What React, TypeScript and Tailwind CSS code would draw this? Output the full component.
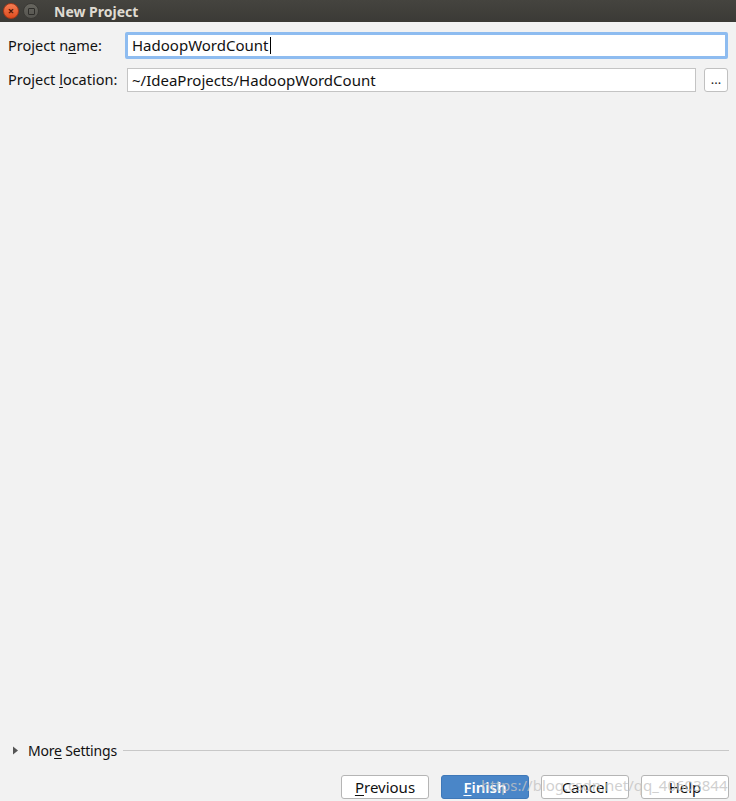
const font = { fontFamily: '"Noto Sans", "DejaVu Sans", sans-serif' };

function Btn({ u, rest, primary }: { u: string; rest: string; primary?: boolean }) {
  return (
    <button
      className={
        primary
          ? "w-[88px] h-[24px] rounded-[3px] border border-[#3f78b8] bg-[#4a86c8] text-white text-[15px] font-semibold leading-none"
          : "w-[88px] h-[24px] rounded-[3px] border border-[#b5b5b5] bg-white text-[#111] text-[15px] leading-none"
      }
    >
      <span className="underline underline-offset-2">{u}</span>
      {rest}
    </button>
  );
}

export default function App() {
  return (
    <div className="w-[736px] h-[801px] flex flex-col bg-[#f2f2f2] overflow-hidden" style={font}>
      {/* title bar */}
      <div className="h-[22px] bg-gradient-to-b from-[#45443f] to-[#3b3a36] flex items-center pl-[3px] gap-[4px]">
        <div className="w-[16px] h-[16px] rounded-full bg-gradient-to-b from-[#f47d52] to-[#de4b1c] border border-[#a8391a] flex items-center justify-center text-[#4a1505] text-[11px] font-bold leading-none pb-px">
          ×
        </div>
        <div className="w-[16px] h-[16px] rounded-full bg-gradient-to-b from-[#67665f] to-[#55544f] border border-[#3a3935] flex items-center justify-center">
          <div className="w-[7px] h-[7px] border border-[#2e2d2a] rounded-[1px]" />
        </div>
        <span className="ml-[11px] text-[#dfdbd2] text-[14px] font-bold">New Project</span>
      </div>

      {/* form */}
      <div className="flex flex-col px-[8px] pt-[10px] gap-[9px]">
        <div className="flex items-center">
          <label className="w-[117px] text-[14.5px] text-[#111]">
            Project n<span className="underline underline-offset-2">a</span>me:
          </label>
          <div className="flex-1 h-[27px] border-[3px] border-[#8ebcf0] rounded-[2px] bg-white flex items-center px-[4px] text-[15px] text-[#111]">
            HadoopWordCount
            <span className="w-px h-[17px] bg-black ml-px" />
          </div>
        </div>
        <div className="flex items-center">
          <label className="w-[119px] text-[14.5px] text-[#111]">
            Project <span className="underline underline-offset-2">l</span>ocation:
          </label>
          <div className="flex-1 h-[24px] border border-[#c4c4c4] bg-white flex items-center px-[4px] text-[15px] text-[#111]">
            ~/IdeaProjects/HadoopWordCount
          </div>
          <button className="ml-[8px] w-[24px] h-[24px] border border-[#c0c0c0] rounded-[3px] bg-white text-[13px] leading-none pb-[2px] text-[#222]">
            ...
          </button>
        </div>
      </div>

      <div className="flex-1" />

      {/* more settings */}
      <div className="flex items-center px-[12px] gap-[6px]">
        <svg width="8" height="9" viewBox="0 0 8 9">
          <path d="M1 0.5 L6 4.5 L1 8.5 Z" fill="#555" />
        </svg>
        <span className="ml-[2px] text-[14px] tracking-[-0.2px] text-[#111]">
          Mor<span className="underline underline-offset-2">e</span> Settings
        </span>
        <div className="flex-1 h-px bg-[#c8c8c8] ml-[0px] mr-[-5px]" />
      </div>

      {/* buttons */}
      <div className="relative flex justify-end gap-[12px] pr-[7px] pt-[14px] pb-[2px]">
        <Btn u="P" rest="revious" />
        <Btn u="F" rest="inish" primary />
        <Btn u="" rest="Cancel" />
        <Btn u="" rest="Help" />
        <span className="absolute left-[481px] top-[13px] text-[15px] text-[#c4c4c4]/80 pointer-events-none whitespace-nowrap">
          https://blog.csdn.net/qq_40603844
        </span>
      </div>
    </div>
  );
}
